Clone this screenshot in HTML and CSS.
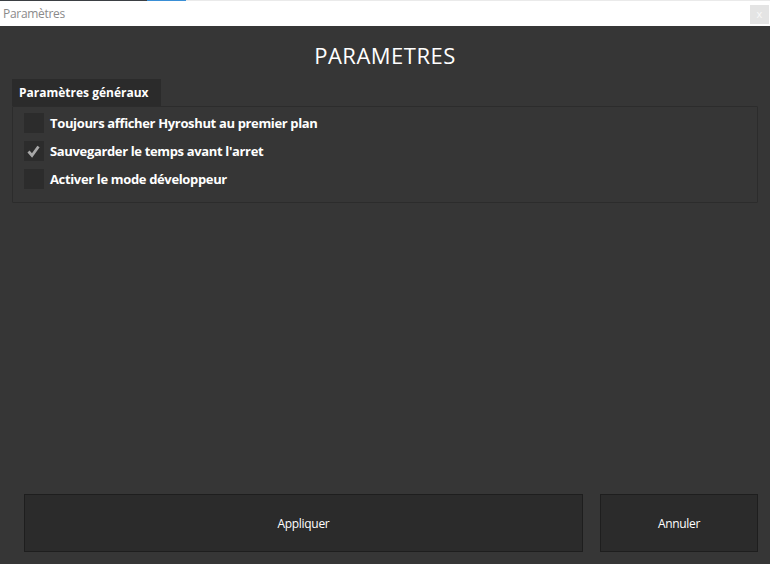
FILE: index.html
```html
<!DOCTYPE html>
<html lang="fr">
<head>
<meta charset="utf-8">
<title>Paramètres</title>
<link rel="stylesheet" href="styles.css">
</head>
<body>
<div class="window">
  <div class="topline">
    <span class="seg seg-dark"></span>
    <span class="seg seg-blue"></span>
    <span class="seg seg-light"></span>
  </div>
  <div class="titlebar">
    <span class="wintitle">Paramètres</span>
    <span class="close">x</span>
  </div>
  <div class="body">
    <h1 class="heading">PARAMETRES</h1>
    <div class="tabs">
      <div class="tab">Paramètres généraux</div>
    </div>
    <div class="group">
      <label class="row"><span class="box"></span><span class="label">Toujours afficher Hyroshut au premier plan</span></label>
      <label class="row"><span class="box checked"><svg width="20" height="20" viewBox="0 0 20 20"><path d="M4.5 10.5 L8 14.5 L14.5 5.5" fill="none" stroke="#a8a8a8" stroke-width="2.8" stroke-linecap="butt" stroke-linejoin="miter"/></svg></span><span class="label">Sauvegarder le temps avant l'arret</span></label>
      <label class="row"><span class="box"></span><span class="label">Activer le mode développeur</span></label>
    </div>
    <div class="spacer"></div>
    <div class="actions">
      <button class="btn btn-apply">Appliquer</button>
      <button class="btn btn-cancel">Annuler</button>
    </div>
  </div>
</div>
</body>
</html>
```

FILE: styles.css
```css
html, body {
  margin: 0;
  padding: 0;
  width: 770px;
  height: 564px;
  overflow: hidden;
  background: #363636;
}
.window {
  display: flex;
  flex-direction: column;
  width: 770px;
  height: 564px;
  font-family: "Open Sans", "Noto Sans", sans-serif;
}
.topline {
  display: flex;
  height: 1px;
}
.seg { display: block; height: 1px; }
.seg-dark { width: 147px; background: #3b3f43; }
.seg-blue { width: 39px; background: #3a8fd6; }
.seg-light { flex: 1; background: #eaeaea; }
.titlebar {
  height: 25px;
  background: #ffffff;
  display: flex;
  align-items: center;
  justify-content: space-between;
  padding: 0 1px 0 3px;
}
.wintitle {
  font-size: 12px;
  color: #8a8a8a;
  letter-spacing: -0.3px;
  margin-top: -1px;
}
.close {
  width: 19px;
  height: 19px;
  margin-top: 2px;
  background: #e4e4e4;
  color: #f8f8f8;
  font-size: 11px;
  line-height: 18px;
  text-align: center;
}
.body {
  flex: 1;
  display: flex;
  flex-direction: column;
  padding: 0 12px 12px 12px;
}
.heading {
  margin: 16px 0 0 0;
  height: 37px;
  font-weight: 400;
  font-size: 22px;
  line-height: 26px;
  color: #ffffff;
  text-align: center;
  letter-spacing: 0.5px;
}
.tabs {
  display: flex;
}
.tab {
  width: 149px;
  height: 27px;
  box-sizing: border-box;
  background: #2b2b2b;
  color: #ffffff;
  font-size: 12px;
  font-weight: 700;
  line-height: 27px;
  padding-left: 7px;
  letter-spacing: 0;
}
.group {
  height: 97px;
  box-sizing: border-box;
  border: 1px solid #2c2c2c;
  border-radius: 1px;
  padding: 6px 0 0 11px;
  display: flex;
  flex-direction: column;
  gap: 8px;
}
.row {
  display: flex;
  align-items: center;
  height: 20px;
  gap: 6px;
}
.box {
  width: 20px;
  height: 20px;
  background: #2c2c2c;
  display: flex;
}
.label {
  color: #ffffff;
  font-size: 13px;
  font-weight: 700;
  letter-spacing: -0.35px;
}
.spacer { flex: 1; }
.actions {
  display: flex;
  gap: 17px;
  padding: 0 0 0 12px;
}
.btn {
  height: 58px;
  box-sizing: border-box;
  background: #2b2b2b;
  border: 1px solid #1e1e1e;
  color: #ffffff;
  font-family: "Open Sans", "Noto Sans", sans-serif;
  font-size: 12px;
  letter-spacing: -0.3px;
  padding: 0;
}
.btn-apply { width: 559px; }
.btn-cancel { width: 158px; }
```
